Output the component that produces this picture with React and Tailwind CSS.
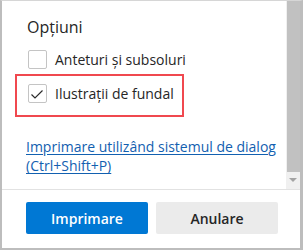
import React from 'react';

const Box = ({ checked }) => (
  <div className="w-[19px] h-[19px] shrink-0 rounded-[2px] border border-[#c4c4c4] bg-white">
    {checked && (
      <svg width="17" height="17" viewBox="0 0 17 17" className="block">
        <path d="M2.5 9.5 L6 13 L13.5 5.5" fill="none" stroke="#2b2b2b" strokeWidth="1.2" />
      </svg>
    )}
  </div>
);

const App = () => {
  return (
    <div
      className="w-[303px] h-[250px] flex flex-col bg-white border-t border-t-[#d6d6d6] border-l-2 border-r-[3px] border-b-2 border-[#bdbdbd] text-[#262626]"
      style={{ fontFamily: '"Open Sans", "Noto Sans", sans-serif' }}
    >
      {/* scrolling part */}
      <div className="flex h-[188px]">
        <div className="flex-1 pl-[13px]">
          <div className="ml-[12px] mt-[15px] text-[16px] leading-[22px]">Opțiuni</div>

          <div className="ml-[13px] mt-[12px] flex items-center gap-[8px] text-[14px] leading-[19px]">
            <Box />
            <span>Anteturi și subsoluri</span>
          </div>

          {/* highlighted row */}
          <div className="mt-[5px] w-[169px] h-[43px] border-2 border-[#f0484f] pl-[11px] pt-[8px]">
            <div className="flex items-center gap-[8px] text-[14px] leading-[19px]">
              <Box checked />
              <span>Ilustrații de fundal</span>
            </div>
          </div>

          <a className="block ml-[11px] mt-[20px] w-[256px] text-[14px] leading-[19px] text-[#1260b0] underline underline-offset-2">
            Imprimare utilizând sistemul de dialog (Ctrl+Shift+P)
          </a>
        </div>

        {/* scrollbar */}
        <div className="w-[14px] bg-[#f0f0f0] flex flex-col">
          <div className="ml-px h-[171px] bg-[#c1c1c1]"></div>
          <div className="flex justify-center mt-[6px]">
            <svg width="8" height="5" viewBox="0 0 8 5">
              <path d="M0 0 H8 L4 4 Z" fill="#a3a3a3" />
            </svg>
          </div>
        </div>
      </div>

      {/* footer */}
      <div className="border-t border-[#e2e2e2] pt-[12px] pl-[24px] flex gap-[8px] text-[14px]">
        <button className="w-[122px] h-[32px] rounded-[2px] bg-[#0078d4] text-white font-semibold">
          Imprimare
        </button>
        <button className="w-[122px] h-[32px] rounded-[2px] bg-[#ebebeb] text-[#262626] font-semibold">
          Anulare
        </button>
      </div>
    </div>
  );
};

export default App;
